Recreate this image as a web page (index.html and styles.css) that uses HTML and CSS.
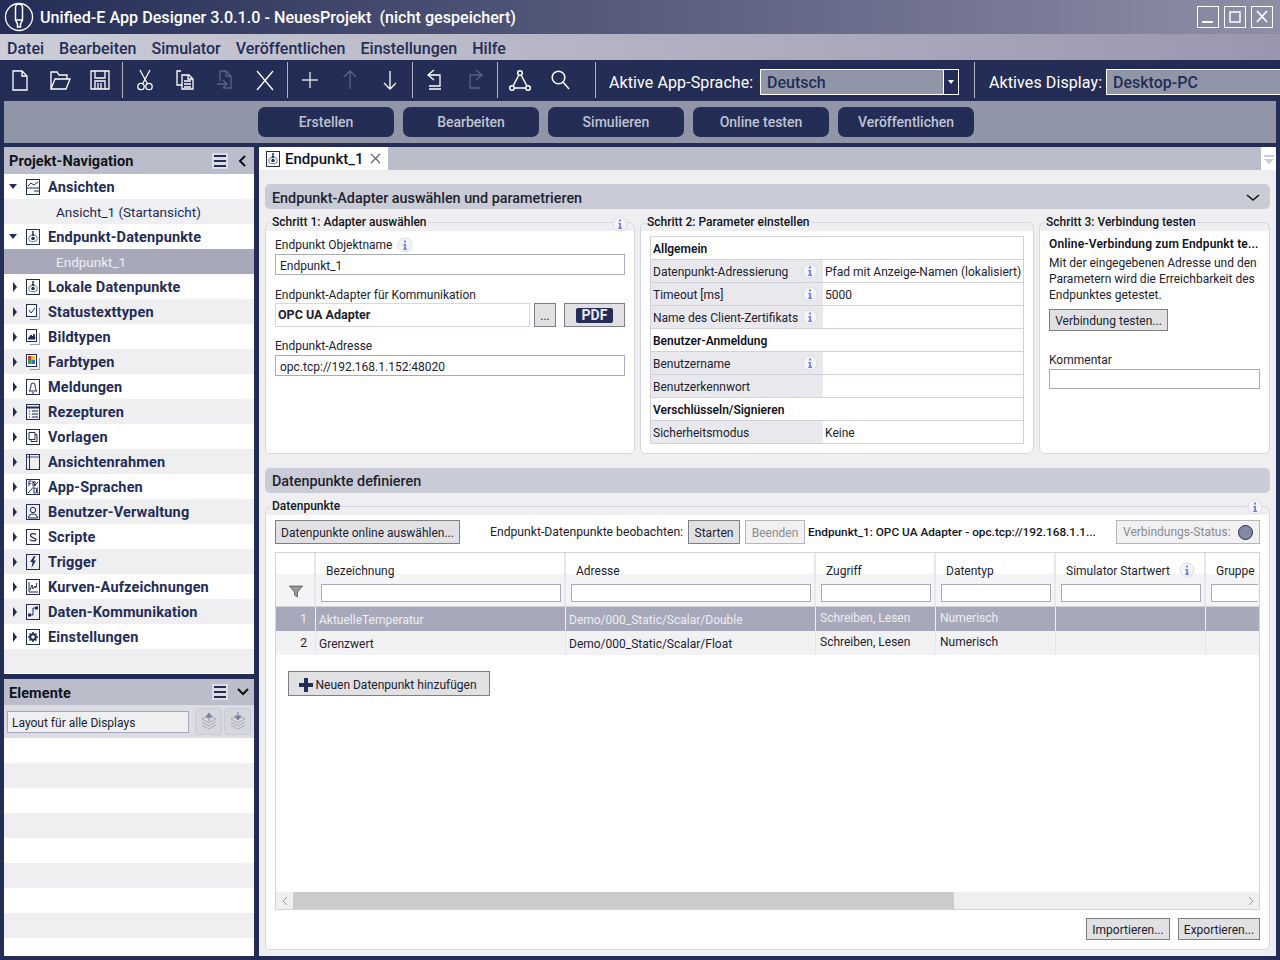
FILE: index.html
```html
<!DOCTYPE html>
<html lang="de">
<head>
  <meta charset="UTF-8" />
  <title>Unified-E App Designer</title>
  <link rel="stylesheet" href="styles.css">
</head>
<body>
  <svg class="defs" width="0" height="0">
    <symbol id="info" viewBox="0 0 16 16">
      <circle cx="8" cy="8" r="7" fill="#f4f4fb" stroke="#dcdce8"/>
      <rect x="7" y="3.5" width="2" height="2" fill="#7c7cf2"/>
      <path d="M6.2 7h2.8v4.6h1V13H6.2v-1.4h1V8.3h-1z" fill="#7c7cf2"/>
    </symbol>
    <symbol id="endpoint" viewBox="0 0 14 16">
      <rect x=".5" y=".5" width="13" height="15" fill="#fff" stroke="#232d56"/>
      <path d="M7 2v3" stroke="#232d56" stroke-width="1.4"/>
      <ellipse cx="7" cy="9.5" rx="4.2" ry="3.2" fill="none" stroke="#6d7390"/>
      <circle cx="7" cy="9.5" r="1.8" fill="#232d56"/>
      <path d="M5.5 5h3L7 7.500z" fill="#232d56"/>
    </symbol>
  </svg>

  <div class="titlebar">
    <svg class="logo" width="30" height="30" viewBox="0 0 30 30" fill="none" stroke="#fff">
      <circle cx="15" cy="15" r="13.5" stroke-width="1.3"/>
      <path d="M11.5 5.5a3.5 3.5 0 0 1 7 0V18l-2 4v3h-3v-3l-2-4z" stroke-width="1.5"/>
      <path d="M12 18h6" stroke-width="1.5"/>
    </svg>
    <span class="title">Unified-E App Designer 3.0.1.0 - NeuesProjekt&nbsp; (nicht gespeichert)</span>
    <div class="winbtns">
      <span class="winbtn"><svg width="20" height="20" fill="#fff"><rect x="4" y="14" width="11" height="2"/></svg></span>
      <span class="winbtn"><svg width="20" height="20" fill="none" stroke="#fff" stroke-width="1.5"><rect x="5" y="5" width="10" height="10"/></svg></span>
      <span class="winbtn"><svg width="20" height="20" stroke="#fff" stroke-width="1.8"><path d="M5 4l10 11M15 4L5 15"/></svg></span>
    </div>
  </div>

  <div class="menubar">
    <span>Datei</span><span>Bearbeiten</span><span>Simulator</span><span>Veröffentlichen</span><span>Einstellungen</span><span>Hilfe</span>
  </div>

  <div class="toolbar">
    <div class="toolgroup">
      <span class="tool"><svg width="22" height="24" fill="none" stroke="#fff" stroke-width="1.3"><path d="M4 3h9l5 5v14H4zM13 3v5h5"/></svg></span>
      <span class="tool"><svg width="24" height="24" fill="none" stroke="#fff" stroke-width="1.3"><path d="M3 21V4h6l2 3h8v4M3 21l4-10h15l-4 10z"/></svg></span>
      <span class="tool"><svg width="22" height="24" fill="none" stroke="#fff" stroke-width="1.3"><path d="M2 3h18v18H2zM6 3v7h10V3M6 21v-8h10v8M9 15v6M12 15v6"/></svg></span>
    </div>
    <div class="toolgroup">
      <span class="tool"><svg width="22" height="24" fill="none" stroke="#fff" stroke-width="1.3"><circle cx="7" cy="18.5" r="3.2"/><circle cx="15" cy="18.5" r="3.2"/><path d="M6 2l7.5 14M16 2L8.5 16"/></svg></span>
      <span class="tool"><svg width="22" height="24" fill="none" stroke="#fff" stroke-width="1.3"><path d="M8 17H3V3h4M8 7h7l4 4v10H8zM14 7v4h5M10 13h7M10 16h7M10 19h7"/></svg></span>
      <span class="tool"><svg width="22" height="24" fill="none" stroke="#5b6485" stroke-width="1.3"><path d="M6 13V3h6l5 5v12H9M12 3v5h5M3 16h9M9 12l4 4-4 4"/></svg></span>
      <span class="tool"><svg width="22" height="24" fill="none" stroke="#fff" stroke-width="1.3"><path d="M3 3l16 19M19 3L3 22"/></svg></span>
    </div>
    <div class="toolgroup">
      <span class="tool"><svg width="22" height="24" fill="none" stroke="#d8dae4" stroke-width="1.4"><path d="M11 4v16M3 12h16"/></svg></span>
      <span class="tool"><svg width="22" height="24" fill="none" stroke="#5b6485" stroke-width="1.3"><path d="M11 3v18M5 9l6-6 6 6"/></svg></span>
      <span class="tool"><svg width="22" height="24" fill="none" stroke="#fff" stroke-width="1.3"><path d="M11 3v18M5 15l6 6 6-6"/></svg></span>
    </div>
    <div class="toolgroup">
      <span class="tool"><svg width="22" height="24" fill="none" stroke="#fff" stroke-width="1.3"><path d="M10 2L4 7l6 5M4 7h12v11H5M5 21h12"/></svg></span>
      <span class="tool"><svg width="22" height="24" fill="none" stroke="#5b6485" stroke-width="1.3"><path d="M12 2l6 5-6 5M18 7H6v13h10"/></svg></span>
    </div>
    <div class="toolgroup lastgroup">
      <span class="tool"><svg width="24" height="24" fill="none" stroke="#fff" stroke-width="1.5"><path d="M12 5L4 20h16z"/><circle cx="12" cy="5" r="2.3" fill="#232d56"/><circle cx="4" cy="20" r="2.3" fill="#232d56"/><circle cx="20" cy="20" r="2.3" fill="#232d56"/></svg></span>
      <span class="tool"><svg width="22" height="24" fill="none" stroke="#fff" stroke-width="1.5"><circle cx="9.5" cy="9.5" r="6.3"/><path d="M14 14l6 7"/></svg></span>
    </div>
    <label class="toollabel langlabel">Aktive App-Sprache:</label>
    <div class="combo">
      <span class="comboval">Deutsch</span>
      <span class="comboarrow"><svg width="8" height="6" fill="#fff"><path d="M1 1h6L4 5z"/></svg></span>
    </div>
    <span class="toolsep"></span>
    <label class="toollabel displaylabel">Aktives Display:</label>
    <div class="combo combo-wide"><span class="comboval">Desktop-PC</span></div>
  </div>

  <div class="navbar">
    <span class="navbtn">Erstellen</span>
    <span class="navbtn">Bearbeiten</span>
    <span class="navbtn">Simulieren</span>
    <span class="navbtn">Online testen</span>
    <span class="navbtn">Veröffentlichen</span>
  </div>

  <div class="main">
    <aside class="side">
      <section class="projnav">
        <div class="panelhead">
          <span class="paneltitle">Projekt-Navigation</span>
          <span class="hamburger"><svg width="12" height="12" fill="#232d56"><rect y="0" width="12" height="2"/><rect y="5" width="12" height="2"/><rect y="10" width="12" height="2"/></svg></span>
          <svg class="panelchev" width="10" height="12" fill="none" stroke="#111" stroke-width="2"><path d="M8 1L3 6l5 5"/></svg>
        </div>
        <ul class="tree">
          <li><i class="arr open"></i><svg class="ticon" viewBox="0 0 14 16" width="14" height="16" fill="none" stroke="#232d56"><rect x=".5" y=".5" width="13" height="15"/><path d="M2 7l3-3 3 2 4-3M1 9h12M8 12h5"/></svg><b>Ansichten</b></li>
          <li class="sub">Ansicht_1 (Startansicht)</li>
          <li><i class="arr open"></i><svg class="ticon" width="14" height="16"><use href="#endpoint"/></svg><b>Endpunkt-Datenpunkte</b></li>
          <li class="sub selected">Endpunkt_1</li>
          <li><i class="arr"></i><svg class="ticon" width="14" height="16"><use href="#endpoint"/></svg><b>Lokale Datenpunkte</b></li>
          <li><i class="arr"></i><svg class="ticon" viewBox="0 0 14 16" width="14" height="16" fill="none" stroke="#232d56"><path d="M4 15.5h9.5V4" stroke="#9a9db0"/><rect x=".5" y=".5" width="10" height="12" fill="#fff"/><path d="M3 6l2 3 4-5"/></svg><b>Statustexttypen</b></li>
          <li><i class="arr"></i><svg class="ticon" viewBox="0 0 14 16" width="14" height="16" fill="none" stroke="#232d56"><path d="M4 15.5h9.5V4" stroke="#9a9db0"/><rect x=".5" y=".5" width="10" height="12" fill="#fff"/><path d="M2 10l3-4 2 2 1-3 1 5z" fill="#232d56"/></svg><b>Bildtypen</b></li>
          <li><i class="arr"></i><svg class="ticon" viewBox="0 0 14 16" width="14" height="16" fill="none" stroke="#232d56"><path d="M4 15.5h9.5V4" stroke="#9a9db0"/><rect x=".5" y=".5" width="10" height="12" fill="#fff"/><rect x="2" y="2" width="3.5" height="4" fill="#e03030" stroke="none"/><rect x="5.5" y="2" width="3.5" height="4" fill="#f0c020" stroke="none"/><rect x="2" y="6" width="3.5" height="4" fill="#30a040" stroke="none"/><rect x="5.5" y="6" width="3.5" height="4" fill="#3070d0" stroke="none"/></svg><b>Farbtypen</b></li>
          <li><i class="arr"></i><svg class="ticon" viewBox="0 0 14 16" width="14" height="16" fill="none" stroke="#232d56"><rect x=".5" y=".5" width="13" height="15"/><path d="M3 12c1.500-1 1.500-3 2-6a2 2 0 0 1 4 0c.5 3 .5 5 2 6zM6 14h2"/></svg><b>Meldungen</b></li>
          <li><i class="arr"></i><svg class="ticon" viewBox="0 0 14 16" width="14" height="16" fill="none" stroke="#232d56"><rect x=".5" y=".5" width="13" height="15"/><path d="M1 3.5h12" stroke-width="2"/><path d="M3 7h1M6 7h6M3 10h1M6 10h6M3 13h1M6 13h6"/></svg><b>Rezepturen</b></li>
          <li><i class="arr"></i><svg class="ticon" viewBox="0 0 14 16" width="14" height="16" fill="none" stroke="#232d56"><rect x=".5" y=".5" width="13" height="15"/><path d="M3 3.5h6v7H3zM9 5.500h2v7H5v-2"/></svg><b>Vorlagen</b></li>
          <li><i class="arr"></i><svg class="ticon" viewBox="0 0 14 16" width="14" height="16" fill="none" stroke="#232d56"><rect x=".5" y=".5" width="13" height="15"/><path d="M1 3h12" stroke="#9a9db0" stroke-width="2"/><path d="M3.5 1v14"/></svg><b>Ansichtenrahmen</b></li>
          <li><i class="arr"></i><svg class="ticon" viewBox="0 0 14 16" width="14" height="16" fill="none" stroke="#232d56"><rect x=".5" y=".5" width="13" height="15"/><path d="M3 7V2h2.500M3 4.500h2M7 7V2l2 5V2M12 3L2 14M8 9v5h1.500l1-1v-3l-1-1zM12 9h-1v5h1.500M11 11.500h1"/></svg><b>App-Sprachen</b></li>
          <li><i class="arr"></i><svg class="ticon" viewBox="0 0 14 16" width="14" height="16" fill="none" stroke="#232d56"><rect x=".5" y=".5" width="13" height="15"/><circle cx="7" cy="6" r="2.7"/><path d="M2.500 14c0-3 2-4 4.500-4s4.500 1 4.500 4z"/></svg><b>Benutzer-Verwaltung</b></li>
          <li><i class="arr"></i><svg class="ticon" viewBox="0 0 14 16" width="14" height="16" fill="none" stroke="#232d56"><rect x=".5" y=".5" width="13" height="15"/><path d="M10 5.500C9 4.500 4.500 4 4.500 6.500S10 8.500 10 10.500 5 12 4 10.500" stroke-width="1.3"/></svg><b>Scripte</b></li>
          <li><i class="arr"></i><svg class="ticon" viewBox="0 0 14 16" width="14" height="16" fill="none" stroke="#232d56"><rect x=".5" y=".5" width="13" height="15"/><path d="M8 2L4 8h2.500L5.500 14 10 6.500H7.500L9.500 2z" fill="#232d56" stroke="none"/></svg><b>Trigger</b></li>
          <li><i class="arr"></i><svg class="ticon" viewBox="0 0 14 16" width="14" height="16" fill="none" stroke="#232d56"><rect x=".5" y=".5" width="13" height="15"/><path d="M3 3v10h9M4 11l2-5 1 4 2-3 1 2 1-5"/></svg><b>Kurven-Aufzeichnungen</b></li>
          <li><i class="arr"></i><svg class="ticon" viewBox="0 0 14 16" width="14" height="16" fill="none" stroke="#232d56"><rect x=".5" y=".5" width="13" height="15"/><path d="M4 11h3V4h3"/><rect x="2.500" y="10" width="2" height="2" fill="#232d56"/><rect x="9.500" y="3" width="2" height="2" fill="#232d56"/></svg><b>Daten-Kommunikation</b></li>
          <li><i class="arr"></i><svg class="ticon" viewBox="0 0 14 16" width="14" height="16" fill="none" stroke="#232d56"><rect x=".5" y=".5" width="13" height="15"/><circle cx="7" cy="8" r="2.8" stroke-width="2"/><path d="M7 3v2M7 11v2M2 8h2M10 8h2M3.500 4.500l1.500 1.500M10.500 4.500L9 6M3.500 11.500L5 10M10.500 11.500L9 10" stroke-width="1.6"/></svg><b>Einstellungen</b></li>
        </ul>
      </section>
      <section class="elements">
        <div class="panelhead elemhead">
          <span class="paneltitle">Elemente</span>
          <span class="hamburger"><svg width="12" height="12" fill="#232d56"><rect y="0" width="12" height="2"/><rect y="5" width="12" height="2"/><rect y="10" width="12" height="2"/></svg></span>
          <svg class="panelchev elemchev" width="12" height="10" fill="none" stroke="#111" stroke-width="2"><path d="M1 2l5 5 5-5"/></svg>
        </div>
        <div class="elemtools">
          <span class="elemcombo">Layout für alle Displays</span>
          <span class="layerbtn"><svg width="20" height="22" fill="none" stroke="#a8abbc"><path d="M3 11l7 4 7-4M3 14l7 4 7-4M3 8l7 4 7-4-3-2H6z"/><path d="M10 10V5M7 6l3-4 3 4z" stroke="#7d8299" fill="#7d8299"/></svg></span>
          <span class="layerbtn"><svg width="20" height="22" fill="none" stroke="#a8abbc"><path d="M3 11l7 4 7-4M3 14l7 4 7-4M3 8l7 4 7-4-3-2H6z"/><path d="M10 1v5M7 5l3 4 3-4z" stroke="#7d8299" fill="#7d8299"/></svg></span>
        </div>
        <div class="stripes"></div>
      </section>
    </aside>

    <div class="content">
      <div class="tabstrip">
        <div class="tab">
          <svg width="14" height="16"><use href="#endpoint"/></svg>
          <span class="tabname">Endpunkt_1</span>
          <svg class="tabclose" width="11" height="11" stroke="#666" stroke-width="1.2"><path d="M1 1l9 9M10 1l-9 9"/></svg>
        </div>
        <div class="tabrest"></div>
        <div class="tabmenu"><svg width="10" height="10" fill="#c9ccd6"><rect y="1" width="10" height="2"/><path d="M0 5h10L5 10z"/></svg></div>
      </div>

      <div class="pane">
        <div class="sectionhead first">
          <span>Endpunkt-Adapter auswählen und parametrieren</span>
          <svg width="14" height="8" fill="none" stroke="#111" stroke-width="1.6"><path d="M1 1l6 5 6-5"/></svg>
        </div>
        <div class="steps">
          <fieldset class="box step1">
            <legend>Schritt 1: Adapter auswählen</legend>
            <svg class="info boxinfo" width="16" height="16"><use href="#info"/></svg>
            <div class="fieldlabel">Endpunkt Objektname <svg class="info" width="16" height="16"><use href="#info"/></svg></div>
            <div class="input">Endpunkt_1</div>
            <div class="fieldlabel adapterlabel">Endpunkt-Adapter für Kommunikation</div>
            <div class="adapter">
              <div class="input adaptername">OPC UA Adapter</div>
              <span class="btn dots">...</span>
              <span class="btn pdf"><span class="pdfbadge">PDF</span></span>
            </div>
            <div class="fieldlabel addresslabel">Endpunkt-Adresse</div>
            <div class="input">opc.tcp://192.168.1.152:48020</div>
          </fieldset>

          <fieldset class="box step2">
            <legend>Schritt 2: Parameter einstellen</legend>
            <div class="props">
              <div class="prop head">Allgemein</div>
              <div class="prop"><span class="pkey">Datenpunkt-Adressierung<svg class="info" width="16" height="16"><use href="#info"/></svg></span><span class="pval">Pfad mit Anzeige-Namen (lokalisiert)</span></div>
              <div class="prop"><span class="pkey">Timeout [ms]<svg class="info" width="16" height="16"><use href="#info"/></svg></span><span class="pval">5000</span></div>
              <div class="prop"><span class="pkey">Name des Client-Zertifikats<svg class="info" width="16" height="16"><use href="#info"/></svg></span><span class="pval"></span></div>
              <div class="prop head">Benutzer-Anmeldung</div>
              <div class="prop"><span class="pkey">Benutzername<svg class="info" width="16" height="16"><use href="#info"/></svg></span><span class="pval"></span></div>
              <div class="prop"><span class="pkey">Benutzerkennwort</span><span class="pval"></span></div>
              <div class="prop head">Verschlüsseln/Signieren</div>
              <div class="prop"><span class="pkey">Sicherheitsmodus</span><span class="pval">Keine</span></div>
            </div>
          </fieldset>

          <fieldset class="box step3">
            <legend>Schritt 3: Verbindung testen</legend>
            <div class="testhead">Online-Verbindung zum Endpunkt te...</div>
            <p class="testtext">Mit der eingegebenen Adresse und den Parametern wird die Erreichbarkeit des Endpunktes getestet.</p>
            <span class="btn testbtn">Verbindung testen...</span>
            <div class="fieldlabel commentlabel">Kommentar</div>
            <div class="input"></div>
          </fieldset>
        </div>

        <div class="sectionhead second"><span>Datenpunkte definieren</span></div>
        <fieldset class="box points">
          <legend>Datenpunkte</legend>
          <svg class="info boxinfo pointsinfo" width="16" height="16"><use href="#info"/></svg>
          <div class="pointbar">
            <span class="btn onlinebtn">Datenpunkte online auswählen...</span>
            <span class="watchlabel">Endpunkt-Datenpunkte beobachten:</span>
            <span class="btn startbtn">Starten</span>
            <span class="btn stopbtn">Beenden</span>
            <span class="conn">Endpunkt_1: OPC UA Adapter - opc.tcp://192.168.1.1...</span>
            <span class="status">Verbindungs-Status:<i class="led"></i></span>
          </div>

          <div class="grid">
            <div class="gridhead">
              <div class="gh gh-first"><svg class="filter" width="14" height="13" fill="#555" stroke="#333" stroke-width=".6"><path d="M.5 1h13L8.500 7v5l-3-2V7z" fill="#9a9a9a"/></svg></div>
              <div class="gh"><span>Bezeichnung</span><i class="filterbox"></i></div>
              <div class="gh"><span>Adresse</span><i class="filterbox"></i></div>
              <div class="gh"><span>Zugriff</span><i class="filterbox"></i></div>
              <div class="gh"><span>Datentyp</span><i class="filterbox"></i></div>
              <div class="gh"><span>Simulator Startwert<svg class="info" width="16" height="16"><use href="#info"/></svg></span><i class="filterbox"></i></div>
              <div class="gh"><span>Gruppe</span><i class="filterbox"></i></div>
            </div>
            <div class="gridrow rowsel">
              <div class="num">1</div><div class="cell">AktuelleTemperatur</div><div class="cell">Demo/000_Static/Scalar/Double</div><div class="cell up">Schreiben, Lesen</div><div class="cell up">Numerisch</div><div class="cell"></div><div class="cell"></div>
            </div>
            <div class="gridrow">
              <div class="num">2</div><div class="cell">Grenzwert</div><div class="cell">Demo/000_Static/Scalar/Float</div><div class="cell up">Schreiben, Lesen</div><div class="cell up">Numerisch</div><div class="cell"></div><div class="cell"></div>
            </div>
            <div class="gridbody">
              <span class="btn addbtn"><svg width="14" height="14" fill="#232d56"><path d="M5 0h4v5h5v4H9v5H5V9H0V5h5z"/></svg>Neuen Datenpunkt hinzufügen</span>
            </div>
            <div class="hscroll">
              <span class="hs-arrow"><svg width="6" height="10" fill="none" stroke="#999"><path d="M5 1L1 5l4 4"/></svg></span>
              <span class="hs-thumb"></span>
              <span class="hs-track"></span>
              <span class="hs-arrow"><svg width="6" height="10" fill="none" stroke="#999"><path d="M1 1l4 4-4 4"/></svg></span>
            </div>
          </div>

          <div class="bottombtns">
            <span class="btn impbtn">Importieren...</span>
            <span class="btn expbtn">Exportieren...</span>
          </div>
        </fieldset>
      </div>
    </div>
  </div>
</body>
</html>
```

FILE: styles.css
```css
* {
  margin: 0;
  padding: 0;
  box-sizing: border-box;
}

html, body {
  width: 1280px;
  height: 960px;
  overflow: hidden;
}

body {
  display: flex;
  flex-direction: column;
  background: #232d56;
  font-family: Roboto, "Noto Sans", sans-serif;
  font-size: 12px;
  color: #1c2230;
}

.defs {
  position: absolute;
}

/* Title + menu */
.titlebar {
  height: 34px;
  flex: none;
  display: flex;
  align-items: center;
  padding: 0 7px 0 4px;
  background: linear-gradient(90deg, #232d56, #8e8ea6);
  color: #fff;
}

.title {
  margin-left: 6px;
  font-size: 16.15px;
  font-weight: 500;
  white-space: pre;
}

.winbtns {
  margin-left: auto;
  display: flex;
  gap: 5px;
}

.winbtn {
  width: 22px;
  height: 22px;
  border: 1px solid #fff;
  display: flex;
}

.menubar {
  height: 27px;
  flex: none;
  display: flex;
  align-items: center;
  gap: 15px;
  padding: 2px 0 0 7px;
  background: linear-gradient(90deg, #cbcdd7, #9a96ae);
  font-size: 16px;
  font-weight: 500;
  color: #232d56;
  border-bottom: 1px solid #232d56;
}

/* Toolbar */
.toolbar {
  height: 40px;
  flex: none;
  display: flex;
  align-items: center;
  color: #fff;
}

.toolgroup {
  display: flex;
  flex: none;
  height: 36px;
  margin-top: -2px;
  padding-right: 2px;
  margin-right: 2px;
  border-right: 1px solid #aeb1c2;
  align-items: center;
}

.lastgroup {
  width: 96px;
  margin-right: 13px;
}

.tool {
  width: 40px;
  display: flex;
  justify-content: center;
}

.toollabel {
  width: 151px;
  flex: none;
  margin-top: 2px;
  font-size: 16px;
  letter-spacing: .1px;
  white-space: nowrap;
}

.displaylabel {
  width: 117px;
}

.combo {
  width: 199px;
  height: 26px;
  flex: none;
  margin-top: 2px;
  display: flex;
  align-items: stretch;
  border: 1px solid #fff;
  background: #9096a8;
  color: #232d56;
  font-size: 16px;
  font-weight: 500;
}

.comboval {
  flex: 1;
  padding-left: 6px;
  line-height: 25px;
}

.comboarrow {
  width: 15px;
  background: #232d56;
  border-left: 1px solid #fff;
  display: flex;
  align-items: center;
  justify-content: center;
}

.combo-wide {
  width: 174px;
  border-right: 0;
}

.toolsep {
  width: 1px;
  height: 36px;
  flex: none;
  margin: -2px 14px 0 15px;
  background: #aeb1c2;
}

/* Big nav buttons */
.navbar {
  height: 42px;
  flex: none;
  margin: 0 4px;
  display: flex;
  align-items: center;
  gap: 9px;
  padding-left: 254px;
  background: #9096a8;
}

.navbtn {
  width: 136px;
  height: 30px;
  border-radius: 7px;
  background: #232d56;
  color: #c0c4d2;
  font-size: 14px;
  font-weight: 500;
  line-height: 30px;
  text-align: center;
}

/* Main area */
.main {
  flex: 1;
  min-height: 0;
  display: flex;
  gap: 5px;
  margin: 4px;
}

.side {
  width: 250px;
  flex: none;
  display: flex;
  flex-direction: column;
  gap: 5px;
}

.projnav {
  height: 527px;
  flex: none;
  background: #efeff2;
  border-bottom: 1px solid #fff;
}

.panelhead {
  height: 27px;
  display: flex;
  align-items: center;
  padding: 1px 0 0 5px;
  background: #bbbeca;
}

.elemhead {
  height: 26px;
  padding-top: 0;
}

.paneltitle {
  flex: 1;
  font-size: 14.5px;
  font-weight: 700;
  letter-spacing: .1px;
  color: #11131c;
}

.elemhead .paneltitle {
  padding-top: 2px;
}

.hamburger {
  width: 16px;
  height: 16px;
  background: #dcdde5;
  display: flex;
  align-items: center;
  justify-content: center;
  margin-right: 9px;
}

.panelchev {
  margin-right: 7px;
}

.elemchev {
  margin-right: 5px;
}

.tree {
  list-style: none;
}

.tree li {
  height: 25px;
  display: flex;
  align-items: center;
  padding-left: 5px;
  background: #fff;
  color: #232d56;
  font-size: 14.5px;
}

.tree li:nth-child(even) {
  background: #efeff2;
}

.tree li b {
  font-weight: 700;
  margin-left: 8px;
  padding-top: 2px;
  letter-spacing: .15px;
}

.tree li.sub {
  padding-left: 52px;
  font-size: 13.5px;
}

.tree li.selected {
  background: #a7a9bb;
  color: #eeeef3;
}

.arr {
  width: 17px;
  height: 8px;
  flex: none;
}

.arr::before {
  content: "";
  display: block;
  width: 0;
  height: 0;
  margin: -1px 0 0 4px;
  border-left: 4px solid #232d56;
  border-top: 5px solid transparent;
  border-bottom: 5px solid transparent;
}

.arr.open::before {
  margin: 1px 0 0;
  border-left: 4px solid transparent;
  border-right: 4px solid transparent;
  border-top: 5px solid #232d56;
  border-bottom: 0;
}

.ticon {
  flex: none;
}

.elements {
  flex: 1;
  min-height: 0;
  display: flex;
  flex-direction: column;
}

.elemtools {
  height: 33px;
  flex: none;
  display: flex;
  align-items: center;
  padding-left: 3px;
  background: #dcdce4;
}

.elemcombo {
  width: 182px;
  height: 22px;
  line-height: 22px;
  padding-left: 4px;
  border: 1px solid #a7a9bb;
  background: #efeff2;
  margin-right: 6px;
}

.layerbtn {
  width: 27px;
  height: 27px;
  margin-right: 2px;
  border: 1px solid #c9c9d4;
  border-radius: 4px;
  background: #d6d6df;
  display: flex;
  align-items: center;
  justify-content: center;
}

.stripes {
  flex: 1;
  background: repeating-linear-gradient(180deg, #fff 0 25px, #efeff2 25px 50px);
}

/* Right side */
.content {
  flex: 1;
  min-width: 0;
  display: flex;
  flex-direction: column;
  background: #efeff2;
}

.tabstrip {
  height: 23px;
  flex: none;
  display: flex;
}

.tab {
  width: 129px;
  display: flex;
  align-items: center;
  padding-left: 7px;
  background: #fff;
}

.tabname {
  margin-left: 5px;
  font-size: 15px;
  font-weight: 500;
  color: #11131c;
}

.tabclose {
  margin-left: 7px;
}

.tabrest {
  flex: 1;
  background: #bbbdca;
}

.tabmenu {
  width: 15px;
  background: #fff;
  display: flex;
  align-items: center;
  justify-content: center;
}

.pane {
  flex: 1;
  min-height: 0;
  display: flex;
  flex-direction: column;
  padding: 14px 6px 6px;
}

.sectionhead {
  height: 25px;
  flex: none;
  display: flex;
  align-items: center;
  justify-content: space-between;
  padding: 1px 10px 0 7px;
  border-radius: 5px;
  background: #c9ccd6;
  font-size: 14.35px;
  font-weight: 500;
  color: #1c2230;
}

.sectionhead.first {
  padding-top: 3px;
}

.second {
  margin-top: 14px;
}

.steps {
  display: flex;
  gap: 5px;
  margin-top: 5px;
}

.box {
  position: relative;
  border: 1px solid #d6d7e0;
  border-radius: 6px;
  background: linear-gradient(#fff, #fff) no-repeat 0 8px;
  min-width: 0;
}

.box legend {
  margin-left: -4px;
  padding: 0 1px;
  height: 16px;
  font-size: 12px;
  font-weight: 500;
  line-height: 16px;
  color: #11131c;
}

.step1,
.step2 {
  height: 240px;
  padding: 6px 9px 0;
}

.step1 {
  width: 370px;
}

.step2 {
  width: 394px;
}

.step3 {
  width: 231px;
  height: 240px;
  padding: 6px 9px 0;
}

.info {
  flex: none;
  vertical-align: middle;
}

.boxinfo {
  position: absolute;
  top: -14px;
  right: 6px;
}

.pointsinfo {
  top: -15px;
}

.fieldlabel {
  height: 18px;
  line-height: 18px;
  display: flex;
  align-items: center;
  gap: 5px;
  white-space: nowrap;
}

.adapterlabel {
  margin: 11px 0 -1px;
}

.addresslabel {
  margin-top: 10px;
}

.input {
  height: 21px;
  padding: 1px 0 0 4px;
  line-height: 20px;
  border: 1px solid #a9abb6;
  background: #fff;
  overflow: hidden;
  white-space: nowrap;
}

.adapter {
  display: flex;
  height: 24px;
}

.adaptername {
  width: 255px;
  height: 24px;
  line-height: 22px;
  padding: 0 0 0 2px;
  border-color: #d6d7e0;
  font-size: 12.5px;
  font-weight: 700;
}

.btn {
  display: inline-flex;
  align-items: center;
  justify-content: center;
  flex: none;
  padding-top: 1px;
  border: 1px solid #7e7f85;
  background: #e1e1e3;
  color: #1c2230;
  white-space: nowrap;
}

.dots {
  width: 22px;
  margin-left: 4px;
}

.pdf {
  width: 61px;
  margin-left: 8px;
  padding-top: 0;
}

.pdfbadge {
  width: 37px;
  height: 15px;
  border-radius: 2px;
  background: #232d56;
  color: #e8e9ee;
  font-size: 14px;
  font-weight: 700;
  line-height: 15px;
  text-align: center;
}

.props {
  border: 1px solid #d0d1da;
  border-bottom-width: 0;
}

.prop {
  height: 23px;
  display: flex;
  border-bottom: 1px solid #d0d1da;
  line-height: 24px;
}

.prop.head {
  padding-left: 2px;
  font-weight: 600;
  color: #11131c;
}

.pkey {
  width: 172px;
  flex: none;
  display: flex;
  align-items: flex-start;
  justify-content: space-between;
  padding: 0 5px 0 2px;
  background: #e9e9ed;
  white-space: nowrap;
}

.pkey .info {
  align-self: center;
}

.pval {
  flex: 1;
  padding-left: 2px;
  white-space: nowrap;
}

.testhead {
  height: 16px;
  line-height: 16px;
  font-weight: 600;
  letter-spacing: .15px;
  color: #11131c;
  white-space: nowrap;
}

.testtext {
  margin-top: 3px;
  line-height: 16px;
}

.testbtn {
  width: 119px;
  height: 22px;
  margin-top: 6px;
}

.commentlabel {
  margin-top: 20px;
  height: 18px;
}

.step3 .input {
  height: 20px;
}

.points {
  flex: 1;
  min-height: 0;
  margin-top: 5px;
  display: flex;
  flex-direction: column;
  padding: 6px 9px 0;
}

.pointbar {
  display: flex;
  align-items: center;
  height: 24px;
}

.onlinebtn {
  width: 185px;
  height: 24px;
}

.watchlabel {
  width: 194px;
  margin-left: 30px;
  font-size: 12.2px;
  white-space: nowrap;
}

.startbtn {
  width: 52px;
  height: 24px;
  margin-left: 4px;
}

.stopbtn {
  width: 60px;
  height: 24px;
  margin-left: 5px;
  border-color: #b5b6ba;
  background: #f1f1f3;
  color: #8a8b92;
}

.conn {
  margin-left: 3px;
  font-size: 11.8px;
  font-weight: 500;
  color: #11131c;
  white-space: nowrap;
}

.status {
  margin-left: auto;
  width: 144px;
  height: 24px;
  display: flex;
  align-items: center;
  justify-content: space-between;
  padding: 0 6px;
  border: 1px solid #b5b6ba;
  background: #f1f1f3;
  color: #8a8b92;
}

.led {
  width: 15px;
  height: 15px;
  border-radius: 50%;
  border: 1px solid #232d56;
  background: #8488a0;
}

.grid {
  height: 358px;
  margin-top: 8px;
  display: flex;
  flex-direction: column;
  border: 1px solid #d0d3d8;
  overflow: hidden;
}

.gridhead,
.gridrow {
  display: grid;
  grid-template-columns: 40px 250px 250px 120px 120px 150px 52px;
  flex: none;
}

.gridhead {
  height: 54px;
  border-bottom: 1px solid #d0d3d8;
  background: linear-gradient(#fff 0 21px, #f4f4f6 21px);
}

.gh {
  display: flex;
  flex-direction: column;
  padding: 9px 0 0 5px;
  border-right: 2px solid #e6e7eb;
  overflow: hidden;
}

.gh:last-child {
  border-right: 0;
}

.gh span {
  display: flex;
  justify-content: space-between;
  height: 18px;
  padding: 0 9px 0 5px;
  line-height: 18px;
  white-space: nowrap;
}

.gh-first {
  align-items: center;
  padding: 32px 0 0 1px;
}

.filterbox {
  display: block;
  width: 240px;
  height: 18px;
  margin-top: 4px;
  border: 1px solid #a9abb6;
  background: #fff;
  flex: none;
}

.gh:nth-child(4) .filterbox,
.gh:nth-child(5) .filterbox {
  width: 110px;
}

.gh:nth-child(6) .filterbox {
  width: 140px;
}

.gridrow {
  height: 24px;
  background: #f2f2f5;
}

.num {
  padding-right: 8px;
  text-align: right;
  line-height: 24px;
  border-right: 1px solid #e6e7eb;
}

.cell {
  padding-left: 3px;
  line-height: 26px;
  border-right: 1px solid #e6e7eb;
  white-space: nowrap;
}

.cell:last-child {
  border-right: 0;
}

.cell.up {
  padding-left: 4px;
  line-height: 22px;
}

.rowsel {
  background: #a7a9bb;
  color: #eeeef3;
}

.rowsel .num,
.rowsel .cell {
  border-right-color: #eeeef3;
}

.gridbody {
  flex: 1;
  padding: 16px 0 0 12px;
  background: #fff;
}

.addbtn {
  width: 202px;
  height: 25px;
  gap: 2px;
  padding: 2px 2px 0 0;
}

.hscroll {
  height: 17px;
  flex: none;
  display: flex;
  align-items: center;
  background: #efefef;
}

.hs-arrow {
  width: 17px;
  display: flex;
  justify-content: center;
  flex: none;
}

.hs-thumb {
  width: 661px;
  height: 17px;
  background: #cbcbcb;
}

.hs-track {
  flex: 1;
}

.bottombtns {
  display: flex;
  justify-content: flex-end;
  gap: 8px;
  margin-top: 8px;
}

.impbtn {
  width: 84px;
  height: 22px;
}

.expbtn {
  width: 82px;
  height: 22px;
}
```
